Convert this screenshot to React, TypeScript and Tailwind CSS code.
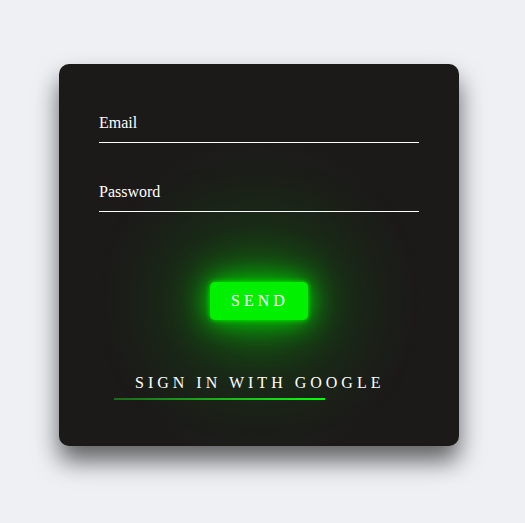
export default function App() {
  return (
    <div className="min-h-[523px] bg-[#eff0f4] pl-[59px] pt-[64px] [font-family:'Liberation_Serif','Times_New_Roman',serif]">
      <div className="h-[382px] w-[400px] rounded-[10px] bg-[#1c1919] bg-[radial-gradient(circle_at_50%_62%,rgba(0,200,0,0.16)_0px,rgba(0,200,0,0.06)_90px,transparent_170px)] px-10 pt-10 shadow-[0_15px_25px_rgba(0,0,0,0.6)]">
        <div className="mb-[30px] border-b border-white py-[10px] text-[16px] leading-[18px] text-white">
          Email
        </div>
        <div className="border-b border-white py-[10px] text-[16px] leading-[18px] text-white">
          Password
        </div>
        <div className="mt-[70px] flex justify-center">
          <button
            type="button"
            className="h-[38px] w-[98px] rounded-[5px] bg-[#00f000] pl-[2px] text-[16px] tracking-[4px] text-white shadow-[0_0_5px_#00f000,0_0_25px_#00d000,0_0_50px_rgba(0,210,0,0.8),0_0_100px_rgba(0,210,0,0.5)]"
          >
            SEND
          </button>
        </div>
        <div className="mt-[54px] flex flex-col items-start pl-[36px]">
          <span className="text-[16px] leading-[18px] tracking-[4px] text-white">
            SIGN IN WITH GOOGLE
          </span>
          <div className="mt-[6px] -ml-[21px] h-[2px] w-[211px] bg-gradient-to-r from-[#1a6a1a] to-[#00ff00]" />
        </div>
      </div>
    </div>
  );
}
